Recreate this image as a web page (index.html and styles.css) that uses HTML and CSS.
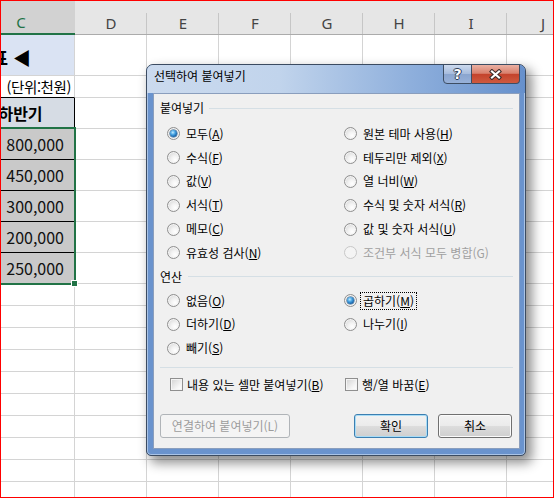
FILE: index.html
```html
<!DOCTYPE html>
<html lang="ko">
<head>
<meta charset="utf-8">
<title>선택하여 붙여넣기</title>
<link rel="stylesheet" href="styles.css">
</head>
<body>
<div class="screen">
  <div class="sheet">
    <div class="hdr cur">C</div><div class="hdr">D</div><div class="hdr">E</div><div class="hdr">F</div><div class="hdr">G</div><div class="hdr">H</div><div class="hdr">I</div><div class="hdr">J</div>
    <div class="title"><span>매출 현황표 ◀</span></div><i></i><i></i><i></i><i></i><i></i><i></i><i></i>
    <div class="unit">(단위:천원)</div><i></i><i></i><i></i><i></i><i></i><i></i><i></i>
    <div class="head">하반기</div><i></i><i></i><i></i><i></i><i></i><i></i><i></i>
    <div class="num">800,000</div><i></i><i></i><i></i><i></i><i></i><i></i><i></i>
    <div class="num">450,000</div><i></i><i></i><i></i><i></i><i></i><i></i><i></i>
    <div class="num">300,000</div><i></i><i></i><i></i><i></i><i></i><i></i><i></i>
    <div class="num">200,000</div><i></i><i></i><i></i><i></i><i></i><i></i><i></i>
    <div class="num">250,000</div><i></i><i></i><i></i><i></i><i></i><i></i><i></i>
    <i></i><i></i><i></i><i></i><i></i><i></i><i></i><i></i>
    <i></i><i></i><i></i><i></i><i></i><i></i><i></i><i></i>
    <i></i><i></i><i></i><i></i><i></i><i></i><i></i><i></i>
    <i></i><i></i><i></i><i></i><i></i><i></i><i></i><i></i>
    <i></i><i></i><i></i><i></i><i></i><i></i><i></i><i></i>
    <i></i><i></i><i></i><i></i><i></i><i></i><i></i><i></i>
    <i></i><i></i><i></i><i></i><i></i><i></i><i></i><i></i>
    <i></i><i></i><i></i><i></i><i></i><i></i><i></i><i></i>
    <i></i><i></i><i></i><i></i><i></i><i></i><i></i><i></i>
    <i></i><i></i><i></i><i></i><i></i><i></i><i></i><i></i>
  </div>
  <div class="selection"></div>
  <div class="handle"></div>

  <div class="dialog">
    <div class="titlebar">
      <span class="title">선택하여 붙여넣기</span>
      <div class="caption">
        <span class="help">?</span>
        <span class="close"><svg width="13" height="11" viewBox="0 0 13 11"><path d="M3 2.5L10 8.5M10 2.5L3 8.5" stroke="#3a2a28" stroke-width="4.2" stroke-linecap="square" fill="none"/><path d="M3 2.5L10 8.5M10 2.5L3 8.5" stroke="#ffffff" stroke-width="2.2" stroke-linecap="square" fill="none"/></svg></span>
      </div>
    </div>
    <div class="client">
      <div class="group">붙여넣기</div>
      <div class="opts paste">
        <label class="opt"><span class="radio on"></span><span>모두(<u>A</u>)</span></label>
        <label class="opt"><span class="radio"></span><span>원본 테마 사용(<u>H</u>)</span></label>
        <label class="opt"><span class="radio"></span><span>수식(<u>F</u>)</span></label>
        <label class="opt"><span class="radio"></span><span>테두리만 제외(<u>X</u>)</span></label>
        <label class="opt"><span class="radio"></span><span>값(<u>V</u>)</span></label>
        <label class="opt"><span class="radio"></span><span>열 너비(<u>W</u>)</span></label>
        <label class="opt"><span class="radio"></span><span>서식(<u>T</u>)</span></label>
        <label class="opt"><span class="radio"></span><span>수식 및 숫자 서식(<u>R</u>)</span></label>
        <label class="opt"><span class="radio"></span><span>메모(<u>C</u>)</span></label>
        <label class="opt"><span class="radio"></span><span>값 및 숫자 서식(<u>U</u>)</span></label>
        <label class="opt"><span class="radio"></span><span>유효성 검사(<u>N</u>)</span></label>
        <label class="opt disabled"><span class="radio"></span><span>조건부 서식 모두 병합(G)</span></label>
      </div>
      <div class="group second">연산</div>
      <div class="opts ops">
        <label class="opt"><span class="radio"></span><span>없음(<u>O</u>)</span></label>
        <label class="opt"><span class="radio on"></span><span class="focus">곱하기(<u>M</u>)</span></label>
        <label class="opt"><span class="radio"></span><span>더하기(<u>D</u>)</span></label>
        <label class="opt"><span class="radio"></span><span>나누기(<u>I</u>)</span></label>
        <label class="opt"><span class="radio"></span><span>빼기(<u>S</u>)</span></label>
      </div>
      <div class="sep"></div>
      <div class="checks">
        <label class="chk"><span class="box"></span><span>내용 있는 셀만 붙여넣기(<u>B</u>)</span></label>
        <label class="chk"><span class="box"></span><span>행/열 바꿈(<u>E</u>)</span></label>
      </div>
      <div class="buttons">
        <span class="btn link">연결하여 붙여넣기(L)</span>
        <span class="btn ok">확인</span>
        <span class="btn cancel">취소</span>
      </div>
    </div>
  </div>
</div>
</body>
</html>
```

FILE: styles.css
```css
* { box-sizing: border-box; }

body {
  margin: 0;
  background: #ffffff;
  font-family: "Noto Sans CJK KR", "Noto Sans", sans-serif;
}

.screen {
  position: relative;
  width: 554px;
  height: 498px;
  border: 1px solid #ff0000;
  overflow: hidden;
  background: #ffffff;
}

/* ---------- spreadsheet ---------- */
.sheet {
  display: grid;
  margin-left: -34px;
  grid-template-columns: 108px repeat(7, 72px);
  grid-template-rows: 34px 41px 22px 31px repeat(5, 31px) repeat(10, 22px);
}

.sheet > * {
  display: block;
  border-right: 1px solid #d4d4d4;
  border-bottom: 1px solid #d4d4d4;
}

.sheet > .hdr {
  display: flex;
  justify-content: center;
  align-items: center;
  padding-top: 11px;
  border-right: 0;
  border-bottom: 1px solid #ababab;
  background: linear-gradient(#c6c6c6, #c6c6c6) right bottom / 1px 21px no-repeat, #e6e6e6;
  font: 15px/1 "Noto Sans", sans-serif;
  color: #444444;
}

.sheet > .hdr.cur {
  background: #d2d2d2;
  border-bottom: 2px solid #217346;
  color: #217346;
}

.sheet > .title {
  display: flex;
  justify-content: flex-end;
  align-items: center;
  padding-right: 43px;
  background: #dae3f3;
  font-size: 18px;
  font-weight: bold;
  white-space: nowrap;
  overflow: hidden;
}

.sheet > .unit {
  display: flex;
  justify-content: flex-end;
  align-items: center;
  padding-right: 3px;
  border-bottom-color: #000000;
  font-size: 14.5px;
  letter-spacing: -0.4px;
  white-space: nowrap;
}

.sheet > .head {
  display: flex;
  justify-content: center;
  align-items: center;
  background: #d6dce4;
  border-right-color: #000000;
  border-bottom-color: #000000;
  font-size: 16px;
  font-weight: bold;
}

.sheet > .num {
  display: flex;
  justify-content: flex-end;
  align-items: center;
  padding-right: 10px;
  background: #c9c9c9;
  border-right-color: #000000;
  border-bottom-color: #000000;
  font-size: 16px;
  color: #111111;
}

.selection {
  position: absolute;
  left: -10px;
  top: 126px;
  width: 85px;
  height: 158px;
  border: 2px solid #217346;
}

.handle {
  position: absolute;
  left: 70px;
  top: 279px;
  width: 7px;
  height: 7px;
  background: #217346;
  border: 1px solid #ffffff;
}

/* ---------- dialog ---------- */
.dialog {
  position: absolute;
  left: 145px;
  top: 63px;
  width: 380px;
  height: 392px;
  display: flex;
  flex-direction: column;
  padding: 0 5px 6px 6px;
  border: 1px solid #3b4b61;
  border-radius: 7px 7px 5px 5px;
  background: #6a93cd;
  box-shadow: inset 0 0 0 1px #a9c3e6, 5px 6px 12px 1px rgba(0, 0, 0, 0.45);
  font-size: 12px;
  color: #000000;
}

.titlebar {
  height: 28px;
  margin: 0 -5px 0 -6px;
  padding: 0 5px 0 7px;
  display: flex;
  align-items: flex-start;
  border-radius: 6px 6px 0 0;
  background: linear-gradient(to right, #cbdaee 0%, #c1d4ec 35%, #8eafdc 70%, #6690cc 100%);
}

.title {
  padding-top: 4px;
  line-height: 14px;
  font-size: 12px;
}

.caption {
  margin-left: auto;
  margin-top: -1px;
  display: flex;
}

.help {
  width: 29px;
  height: 20px;
  display: flex;
  justify-content: center;
  align-items: center;
  border: 1px solid #3d4d63;
  border-radius: 0 0 0 4px;
  background: linear-gradient(#ccdaee 0%, #a7bcdd 48%, #8aa5cf 52%, #97b1d9 100%);
  font: bold 14px/1 "DejaVu Sans", sans-serif;
  color: #ffffff;
  text-shadow: 1px 0 0 #2e3d55, -1px 0 0 #2e3d55, 0 1px 0 #2e3d55, 0 -1px 0 #2e3d55;
}

.close {
  width: 48px;
  height: 20px;
  display: flex;
  justify-content: center;
  align-items: center;
  border: 1px solid #3d4d63;
  border-left: 0;
  border-radius: 0 0 4px 0;
  background: linear-gradient(#eab0a2 0%, #d9806d 46%, #c4432c 52%, #cf5a40 100%);
}

.client {
  flex: 1;
  padding: 0 6px;
  background: #f0f0f0;
  border: 1px solid #8a9ebd;
}

.group {
  display: flex;
  align-items: center;
  gap: 5px;
  margin-top: 6px;
  line-height: 16px;
}

.group::after {
  content: "";
  flex: 1;
  height: 1px;
  background: #d5dfe5;
}

.group.second {
  margin-top: 4px;
  gap: 6px;
}

.opts {
  display: grid;
  grid-template-columns: 177px 1fr;
  grid-auto-rows: 23.8px;
  padding-left: 7px;
  margin-top: 6px;
}

.opts.ops { margin-top: 4px; }

.opt {
  display: flex;
  align-items: center;
  gap: 6px;
  line-height: 14px;
  white-space: nowrap;
}

.opt u, .chk u { text-decoration: underline; text-underline-offset: 1px; }

.opt.disabled { color: #a0a0a0; }

.radio {
  position: relative;
  flex: none;
  width: 13px;
  height: 13px;
  border-radius: 50%;
  border: 1px solid #8f8f8f;
  background: radial-gradient(circle at 65% 70%, #ffffff 0%, #f3f3f3 35%, #cfcfcf 100%);
  box-shadow: inset 0 0 0 1px #f4f4f4;
}

.opt.disabled .radio {
  border-color: #c8c8c8;
  background: #f4f4f4;
  box-shadow: none;
}

.radio.on::after {
  content: "";
  position: absolute;
  left: 2px;
  top: 2px;
  width: 7px;
  height: 7px;
  border-radius: 50%;
  background: radial-gradient(circle at 40% 35%, #c6ecff 0%, #4aa6e4 35%, #1762a8 70%, #0b3f75 100%);
  box-shadow: 0 0 0 0.5px #2b5b86;
}

.focus {
  border: 1px dotted #000000;
  padding: 1px 2px;
  margin: -2px -3px;
}

.sep {
  height: 1px;
  margin-top: 6.6px;
  background: #d5dfe5;
}

.checks {
  display: grid;
  grid-template-columns: 175px 1fr;
  padding-left: 10px;
  margin-top: 8px;
  height: 16px;
}

.chk {
  display: flex;
  align-items: center;
  gap: 4px;
  white-space: nowrap;
}

.box {
  flex: none;
  width: 13px;
  height: 13px;
  border: 1px solid #8f8f8f;
  background: linear-gradient(135deg, #d2d2d2 0%, #f6f6f6 70%, #ffffff 100%);
  box-shadow: inset 0 0 0 1px #f4f4f4;
}

.buttons {
  display: flex;
  gap: 10px;
  height: 24px;
  margin-top: 22px;
  margin-right: 1px;
}

.btn {
  display: flex;
  justify-content: center;
  align-items: center;
  width: 74px;
  height: 24px;
  border: 1px solid #707070;
  border-radius: 3px;
  background: linear-gradient(#f2f2f2 0%, #ebebeb 50%, #dddddd 50%, #cfcfcf 100%);
  box-shadow: inset 0 0 0 1px #fbfbfb;
}

.btn.link {
  width: 130px;
  border-color: #b0b4b8;
  background: #f4f4f4;
  box-shadow: none;
  color: #9c9c9c;
}

.btn.ok {
  margin-left: auto;
  border-color: #3c7fb1;
  box-shadow: inset 0 0 0 1px #a8dcf6;
}
```
